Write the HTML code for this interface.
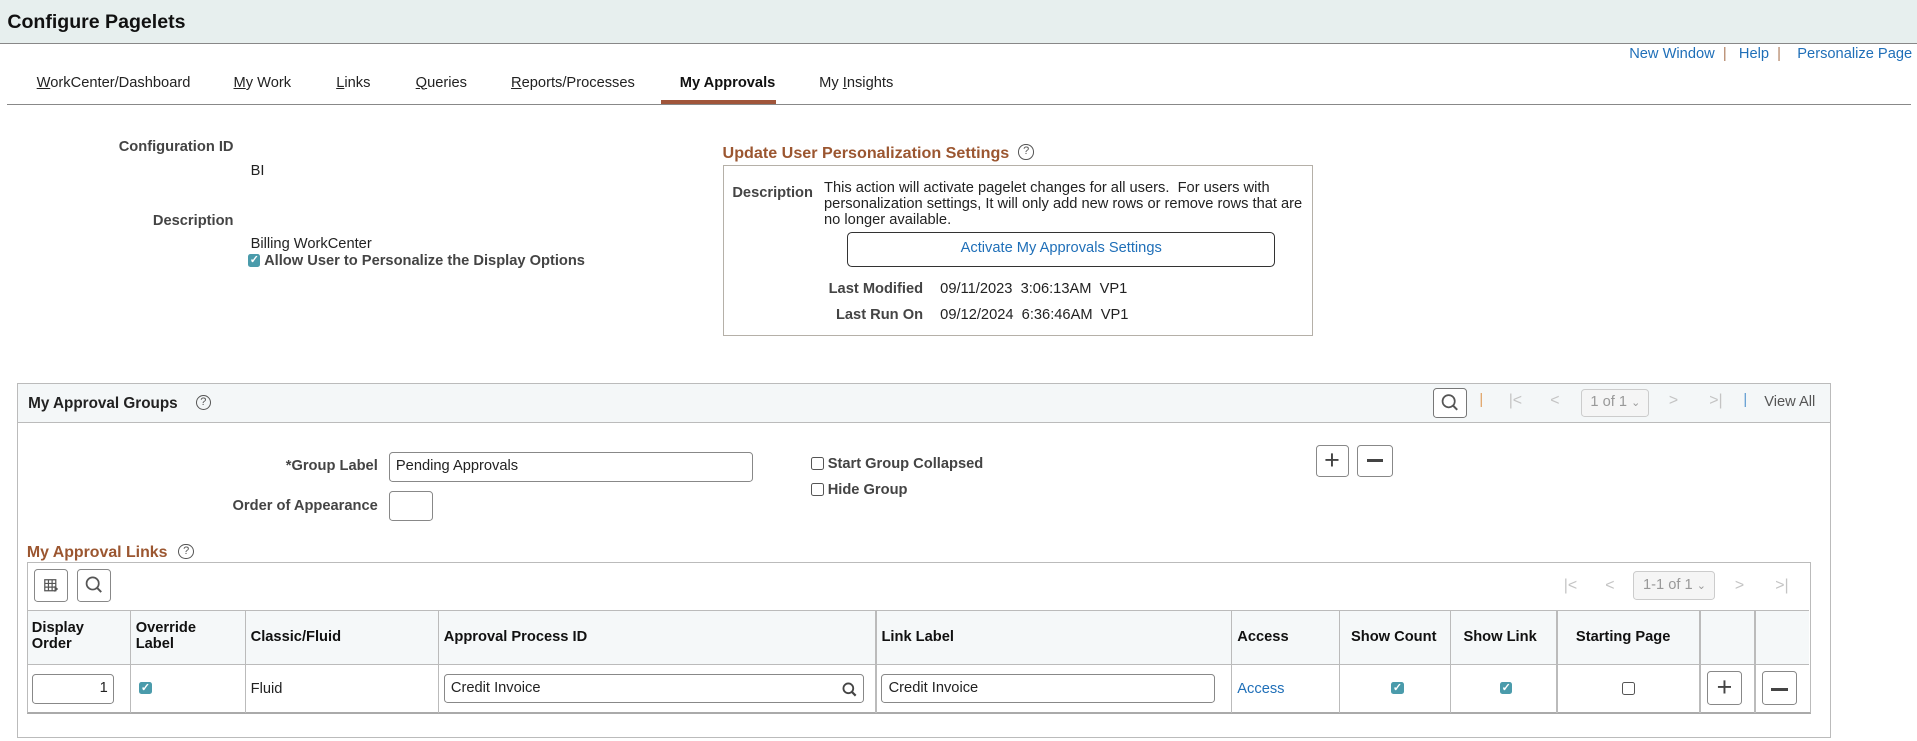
<!DOCTYPE html>
<html><head><meta charset="utf-8">
<style>
html{zoom:1.2226}
body{margin:0;width:1568px;height:606px;position:relative;overflow:hidden;background:#fff;font-family:"Liberation Sans",Arial,sans-serif;font-size:12px;color:#222}
.a{position:absolute;white-space:nowrap}
.lb{font-weight:bold;color:#444}
.br{color:#9b5630;font-weight:bold;font-size:14px}
.blue{color:#1f6fb8}
.hlp{position:absolute;width:11px;height:11px;border:1px solid #555;border-radius:50%;font-size:9px;text-align:center;line-height:11px;color:#555}
.inp{position:absolute;border:1px solid #888;border-radius:3px;background:#fff;box-sizing:border-box;padding-left:5px;font-size:12px;line-height:22px}
.btn{position:absolute;border:1px solid #888;border-radius:3px;background:#fff;box-sizing:border-box}
.cb{position:absolute;width:10px;height:10px;border-radius:2px;background:#4a9bab;color:#fff;font-size:9px;line-height:10px;text-align:center;font-weight:bold}
.cbe{position:absolute;width:9px;height:9px;border:1px solid #555;border-radius:2px;background:#fff}
.nav{position:absolute;color:#c4c4c4;font-size:13px}
.sel{position:absolute;border:1px solid #ccc;border-radius:3px;background:#f5f5f5;color:#999;box-sizing:border-box;font-size:12px;text-align:left;padding-left:7px}
.vl{position:absolute;width:1px;background:#bbb}
.th{position:absolute;font-weight:bold;color:#111;font-size:12px;line-height:13px}
.tab{position:absolute;white-space:nowrap;top:61px;font-size:12px}
</style></head><body>
<div class="a" style="left:0;top:0;width:1568px;height:35px;background:#e7efee;border-bottom:1px solid #888"></div>
<div class="a" style="left:6px;top:9px;font-size:16px;font-weight:bold;color:#111">Configure Pagelets</div>

<div class="a blue" style="right:4px;top:38px;font-size:12px">New Window <span style="color:#b08060">&nbsp;|&nbsp;</span>&nbsp; Help <span style="color:#b08060">&nbsp;|&nbsp;</span>&nbsp;&nbsp; Personalize Page</div>

<div class="tab" style="left:30px"><u>W</u>orkCenter/Dashboard</div>
<div class="tab" style="left:191px"><u>M</u>y Work</div>
<div class="tab" style="left:275px"><u>L</u>inks</div>
<div class="tab" style="left:340px"><u>Q</u>ueries</div>
<div class="tab" style="left:418px"><u>R</u>eports/Processes</div>
<div class="tab" style="left:556px;font-weight:bold;color:#111">My Approvals</div>
<div class="tab" style="left:670px">My <u>I</u>nsights</div>
<div class="a" style="left:6px;top:85px;width:1557px;height:1px;background:#888"></div>
<div class="a" style="left:541px;top:82px;width:94px;height:3px;background:#a0553a"></div>

<div class="a lb" style="right:1377px;top:114px">Configuration ID</div>
<div class="a" style="left:205px;top:133px">BI</div>
<div class="a lb" style="right:1377px;top:174px">Description</div>
<div class="a" style="left:205px;top:193px">Billing WorkCenter</div>
<div class="cb" style="left:203px;top:208px">✓</div>
<div class="a lb" style="left:216px;top:207px">Allow User to Personalize the Display Options</div>

<div class="a br" style="left:591px;top:118px;font-size:13.2px">Update User Personalization Settings</div>
<div class="hlp" style="left:833px;top:118px">?</div>
<div class="a" style="left:591px;top:135px;width:483px;height:140px;border:1px solid #b5b0a8;box-sizing:border-box"></div>
<div class="a lb" style="left:599px;top:151px">Description</div>
<div class="a" style="left:674px;top:148px;line-height:13px">This action will activate pagelet changes for all users.&nbsp; For users with<br>personalization settings, It will only add new rows or remove rows that are<br>no longer available.</div>
<div class="btn" style="left:693px;top:190px;width:350px;height:28px;border-color:#333;border-radius:4px;text-align:center;line-height:26px;color:#1f6fb8">Activate My Approvals Settings</div>
<div class="a lb" style="right:813px;top:230px">Last Modified</div>
<div class="a" style="left:769px;top:230px">09/11/2023&nbsp; 3:06:13AM&nbsp; VP1</div>
<div class="a lb" style="right:813px;top:251px">Last Run On</div>
<div class="a" style="left:769px;top:251px">09/12/2024&nbsp; 6:36:46AM&nbsp; VP1</div>

<div class="a" style="left:14px;top:313px;width:1484px;height:291px;border:1px solid #bbb;box-sizing:border-box"></div>
<div class="a" style="left:15px;top:314px;width:1482px;height:31px;background:#f4f7f8;border-bottom:1px solid #bbb"></div>
<div class="a" style="left:23px;top:323px;font-weight:bold;font-size:12.5px;color:#222">My Approval Groups</div>
<div class="hlp" style="left:160px;top:323px">?</div>
<div class="btn" style="left:1172px;top:317px;width:28px;height:25px;border-color:#777">
<svg width="26" height="23" viewBox="0 0 26 23"><circle cx="12" cy="10" r="5" fill="none" stroke="#555" stroke-width="1.4"/><path d="M15.5 13.5 L19 17" stroke="#555" stroke-width="1.6"/></svg></div>
<div class="a" style="left:1210px;top:321px;color:#e0a060;font-size:12px">|</div>
<div class="nav" style="left:1234px;top:321px">|&lt;</div>
<div class="nav" style="left:1268px;top:321px">&lt;</div>
<div class="sel" style="left:1293px;top:318px;width:56px;height:23px;line-height:21px">1 of 1 <span style="font-size:9px">⌄</span></div>
<div class="nav" style="left:1365px;top:321px">&gt;</div>
<div class="nav" style="left:1398px;top:321px">&gt;|</div>
<div class="a" style="left:1426px;top:321px;color:#5a9ad0;font-size:12px">|</div>
<div class="a" style="left:1443px;top:322px;color:#555">View All</div>

<div class="a lb" style="right:1259px;top:375px">*Group Label</div>
<div class="inp" style="left:318px;top:370px;width:298px;height:24px">Pending Approvals</div>
<div class="a lb" style="right:1259px;top:407px">Order of Appearance</div>
<div class="inp" style="left:318px;top:402px;width:36px;height:24px"></div>
<div class="cbe" style="left:663px;top:374px"></div>
<div class="a lb" style="left:677px;top:373px">Start Group Collapsed</div>
<div class="cbe" style="left:663px;top:395px"></div>
<div class="a lb" style="left:677px;top:394px">Hide Group</div>
<div class="btn" style="left:1076px;top:364px;width:27px;height:26px;text-align:center;line-height:23px;font-size:22px;color:#444">+</div>
<div class="btn" style="left:1110px;top:364px;width:29px;height:26px"><div style="position:absolute;left:7px;top:11px;width:13px;height:2px;background:#444"></div></div>

<div class="a br" style="left:22px;top:445px;font-size:13px">My Approval Links</div>
<div class="hlp" style="left:146px;top:445px">?</div>

<div class="a" style="left:22px;top:460px;width:1459px;height:124px;border:1px solid #bbb;border-bottom:2px solid #aaa;box-sizing:border-box"></div>
<div class="btn" style="left:28px;top:465px;width:28px;height:27px">
<svg width="26" height="25" viewBox="0 0 26 25"><path d="M8 8h9v9h-9z M8 11h9 M8 14h9 M11 8v9 M14 8v9" fill="none" stroke="#555" stroke-width="1"/><path d="M16 13l3 2.5-3 2.5z" fill="#555"/></svg></div>
<div class="btn" style="left:63px;top:465px;width:28px;height:27px">
<svg width="26" height="25" viewBox="0 0 26 25"><circle cx="12" cy="11" r="5" fill="none" stroke="#555" stroke-width="1.4"/><path d="M15.5 14.5 L19 18" stroke="#555" stroke-width="1.6"/></svg></div>
<div class="nav" style="left:1279px;top:472px">|&lt;</div>
<div class="nav" style="left:1313px;top:472px">&lt;</div>
<div class="sel" style="left:1336px;top:467px;width:67px;height:24px;line-height:22px">1-1 of 1 <span style="font-size:9px">⌄</span></div>
<div class="nav" style="left:1419px;top:472px">&gt;</div>
<div class="nav" style="left:1452px;top:472px">&gt;|</div>

<div class="a" style="left:23px;top:499px;width:1457px;height:45px;background:#f5f8f9;border-top:1px solid #bbb;border-bottom:1px solid #bbb;box-sizing:border-box"></div>
<div class="vl" style="left:106px;top:499px;height:84px"></div>
<div class="vl" style="left:200px;top:499px;height:84px"></div>
<div class="vl" style="left:358px;top:499px;height:84px"></div>
<div class="vl" style="left:716px;top:499px;height:84px"></div>
<div class="vl" style="left:1007px;top:499px;height:84px"></div>
<div class="vl" style="left:1095px;top:499px;height:84px"></div>
<div class="vl" style="left:1186px;top:499px;height:84px"></div>
<div class="vl" style="left:1273px;top:499px;height:84px"></div>
<div class="vl" style="left:1390px;top:499px;height:84px"></div>
<div class="vl" style="left:1435px;top:499px;height:84px"></div>
<div class="th" style="left:26px;top:508px">Display<br>Order</div>
<div class="th" style="left:111px;top:508px">Override<br>Label</div>
<div class="th" style="left:205px;top:515px">Classic/Fluid</div>
<div class="th" style="left:363px;top:515px">Approval Process ID</div>
<div class="th" style="left:721px;top:515px">Link Label</div>
<div class="th" style="left:1012px;top:515px">Access</div>
<div class="th" style="left:1105px;top:515px">Show Count</div>
<div class="th" style="left:1197px;top:515px">Show Link</div>
<div class="th" style="left:1289px;top:515px">Starting Page</div>

<div class="inp" style="left:26px;top:551px;width:67px;height:25px;text-align:right;padding-right:4px">1</div>
<div class="cb" style="left:114px;top:558px">✓</div>
<div class="a" style="left:205px;top:557px">Fluid</div>
<div class="inp" style="left:363px;top:551px;width:344px;height:24px">Credit Invoice
<svg style="position:absolute;right:4px;top:5px" width="14" height="14" viewBox="0 0 14 14"><circle cx="6" cy="6" r="4" fill="none" stroke="#444" stroke-width="1.5"/><path d="M9 9 L12 12" stroke="#444" stroke-width="1.8"/></svg></div>
<div class="inp" style="left:721px;top:551px;width:273px;height:24px">Credit Invoice</div>
<div class="a blue" style="left:1012px;top:557px">Access</div>
<div class="cb" style="left:1138px;top:558px">✓</div>
<div class="cb" style="left:1227px;top:558px">✓</div>
<div class="cbe" style="left:1327px;top:558px"></div>
<div class="btn" style="left:1396px;top:549px;width:29px;height:28px;text-align:center;line-height:25px;font-size:22px;color:#444">+</div>
<div class="btn" style="left:1441px;top:549px;width:29px;height:28px"><div style="position:absolute;left:7px;top:13px;width:14px;height:2px;background:#444"></div></div>
</body></html>
